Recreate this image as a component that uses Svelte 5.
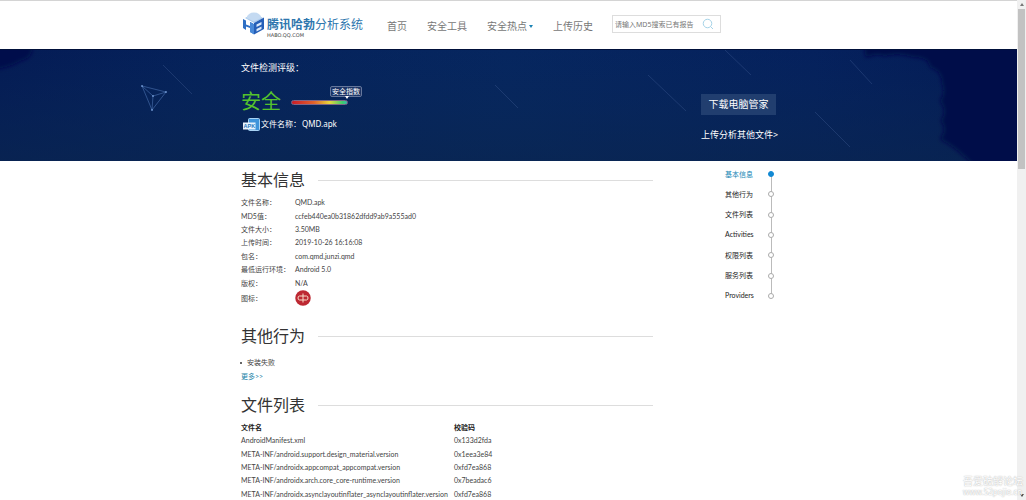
<script>
  const info = [
    ['文件名称：', 'QMD.apk'],
    ['MD5值：', 'ccfeb440ea0b31862dfdd9ab9a555ad0'],
    ['文件大小：', '3.50MB'],
    ['上传时间：', '2019-10-26 16:16:08'],
    ['包名：', 'com.qmd.junzi.qmd'],
    ['最低运行环境：', 'Android 5.0'],
    ['版权：', 'N/A']
  ];
  const files = [
    ['AndroidManifest.xml', '0x133d2fda'],
    ['META-INF/android.support.design_material.version', '0x1eea3e84'],
    ['META-INF/androidx.appcompat_appcompat.version', '0xfd7ea868'],
    ['META-INF/androidx.arch.core_core-runtime.version', '0x7beadac6'],
    ['META-INF/androidx.asynclayoutinflater_asynclayoutinflater.version', '0xfd7ea868']
  ];
  const anchors = ['基本信息', '其他行为', '文件列表', 'Activities', '权限列表', '服务列表', 'Providers'];
  let active = $state(0);
</script>

<div class="shell">
  <div class="page">
    <header>
      <div class="wrap top">
        <a class="logo" href="#home">
          <svg viewBox="0 0 44 46" aria-hidden="true">
            <path d="M4 12 22 2l18 10-18 10z" fill="#a9caec" />
            <path d="M7 12Q10 1 22 1t15 11L22 19z" fill="#c4daf2" />
            <path d="M0 14l6 3v8l8 3v-8l6 3v20l-6-3v-8l-8-3v7l-6-4z" fill="#2f6fc4" />
            <path d="M14 20l8 4v21l-8-5z" fill="#4889d8" />
            <path d="M22 22 42 11v23L22 45z" fill="#255fb8" />
            <path d="M27 25l10-5v5l-10 5zM27 34l10-5v5l-10 5z" fill="#dceafa" />
          </svg>
          <span class="brand">
            <span class="name"><b>腾讯哈勃</b>分析系统</span>
            <span class="domain">HABO.QQ.COM</span>
          </span>
        </a>
        <nav class="menu">
          <a href="#home">首页</a>
          <a href="#tools">安全工具</a>
          <a href="#hot">安全热点<i class="caret"></i></a>
          <a href="#history">上传历史</a>
        </nav>
        <form class="search">
          <input type="text" aria-label="搜索" placeholder="请输入MD5搜索已有报告" />
          <button type="button" aria-label="提交搜索">
            <svg viewBox="0 0 24 24" fill="none" stroke="#a5d3e8" stroke-width="2"><circle cx="11" cy="11" r="8.5" /><path d="M17 17l5 5" /></svg>
          </button>
        </form>
      </div>
    </header>

    <section class="banner">
      <svg class="sky" viewBox="0 0 1017 112" preserveAspectRatio="xMidYMid slice" aria-hidden="true">
        <defs>
          <linearGradient id="night" x1="0" y1="0" x2="1" y2="0">
            <stop offset="0" stop-color="#041b55" />
            <stop offset=".2" stop-color="#05225b" />
            <stop offset=".5" stop-color="#06265f" />
            <stop offset=".8" stop-color="#05215d" />
            <stop offset="1" stop-color="#031a55" />
          </linearGradient>
          <linearGradient id="low" x1="0" y1="0" x2="0" y2="1">
            <stop offset="0" stop-color="#0a2a58" stop-opacity="0" />
            <stop offset="1" stop-color="#0a2650" stop-opacity=".7" />
          </linearGradient>
          <filter id="soft" x="-10%" y="-10%" width="120%" height="120%"><feGaussianBlur stdDeviation="2" /></filter>
        </defs>
        <rect width="1017" height="112" fill="url(#night)" />
        <rect width="1017" height="112" fill="url(#low)" />
        <path d="M-9-9h41v11q-2 8-12 10-8 6-29 9z" fill="#00094c" filter="url(#soft)" />
        <path d="M1030-9H863l3 18q10-6 19-2 14-4 28 1 16 0 17 10 12 4 12 16 4 10-2 18 8 10 1 20 7 8-1 18 20 10 40 34h50z" fill="#000d49" filter="url(#soft)" />
        <path d="M0 0h1017v1H0z" fill="#00103a" />
        <g stroke="#4a68a0" stroke-opacity=".32">
          <path d="M163 16l29 29M495 36l23 23M648 26l38 36M725 1l26 25M850 11l22 24M815 63l35 35" />
        </g>
        <g fill="none" stroke="#5d87c9" stroke-opacity=".6" stroke-width=".8">
          <path d="M142 37l24 6-14 18zM142 37l11 10 13-4M153 47l-1 14" />
        </g>
        <g fill="#7ba3de" fill-opacity=".8"><circle cx="142" cy="37" r="1" /><circle cx="166" cy="43" r="1" /><circle cx="152" cy="61" r="1" /><circle cx="153" cy="47" r="1" /></g>
      </svg>
      <div class="wrap hero">
        <div class="verdict">
          <div class="caption">文件检测评级：</div>
          <div class="score">
            <strong>安全</strong>
            <span class="meter"><span class="tip">安全指数</span></span>
          </div>
          <div class="file">
            <svg viewBox="0 0 34 26" aria-hidden="true">
              <rect x="11" y="1" width="22" height="24" rx="2" fill="#3f94da" stroke="#a8d3f4" stroke-width="2" />
              <rect x="0" y="9" width="25" height="14" fill="#e9f4fd" />
              <text x="1" y="20" font-size="11" font-weight="700" font-family="Liberation Sans, sans-serif" fill="#2877bd">APK</text>
            </svg>
            <span>文件名称：</span><span>QMD.apk</span>
          </div>
        </div>
        <div class="actions">
          <button type="button">下载电脑管家</button>
          <a href="#upload">上传分析其他文件&gt;</a>
        </div>
      </div>
    </section>

    <div class="wrap body">
      <main>
        <section>
          <h2>基本信息</h2>
          <dl>
            {#each info as [label, value]}
              <div><dt>{label}</dt><dd>{value}</dd></div>
            {/each}
          </dl>
          <div class="iconrow">
            <span>图标：</span>
            <svg viewBox="0 0 32 32" role="img" aria-label="QMD">
              <circle cx="16" cy="16" r="15.5" fill="#bd2832" />
              <path d="M9 12h14q3 0 3 4t-3 4H9q-3 0-3-4t3-4zM16 7v18" fill="none" stroke="#f8dcc8" stroke-width="2" />
            </svg>
          </div>
        </section>
        <section class="others">
          <h2>其他行为</h2>
          <ul><li>安装失败</li></ul>
          <a class="more" href="#more">更多&gt;&gt;</a>
        </section>
        <section class="files">
          <h2>文件列表</h2>
          <table>
            <thead><tr><th>文件名</th><th>校验码</th></tr></thead>
            <tbody>
              {#each files as [name, sum]}
                <tr><td>{name}</td><td>{sum}</td></tr>
              {/each}
            </tbody>
          </table>
        </section>
      </main>
      <nav class="anchors">
        {#each anchors as name, i}
          <a href="#section" class:on={active === i} onclick={() => (active = i)}>{name}</a>
        {/each}
      </nav>
    </div>
  </div>
  <div class="scrollbar" aria-hidden="true"><i class="up"></i><div class="thumb"></div><i class="down"></i></div>
  <div class="mark"><span>吾爱破解论坛</span><span class="url">www.52pojie.cn</span></div>
</div>

<style>
  .shell {
    position: relative;
    display: flex;
    height: 100vh;
    overflow: hidden;
    background: #fff;
    color: #444;
    font: 7px/13px "Noto Sans", "Noto Sans CJK SC", sans-serif;
  }
  .page { flex: 1; min-width: 0; }
  a { color: inherit; text-decoration: none; }
  button, input { font: inherit; border: 0; padding: 0; margin: 0; background: none; }
  .wrap { box-sizing: border-box; width: 100%; max-width: 535px; margin: 0 auto; }

  header { border-top: 1px solid #d4d4d4; height: 48px; }
  .top { display: flex; align-items: flex-start; }
  .logo { display: flex; padding: 11px 0 0 2px; gap: 2px; width: 146px; box-sizing: border-box; }
  .logo svg { width: 22px; height: 23px; }
  .brand { display: flex; flex-direction: column; padding-top: 5px; color: #2e76ae; white-space: nowrap; }
  .name { font-size: 12px; line-height: 16px; }
  .domain { font: 5px/5px "DejaVu Sans", sans-serif; color: #444; }
  .menu { display: flex; gap: 20px; padding-top: 18px; font-size: 10px; line-height: 14px; color: #777; white-space: nowrap; }
  .menu a { display: flex; align-items: center; }
  .caret { border: 2px solid transparent; border-top: 3px solid #1b83b5; border-bottom: 0; margin-left: 2px; }
  .search {
    display: flex;
    align-items: center;
    box-sizing: border-box;
    width: 109px;
    height: 18px;
    margin: 14px 0 0 19px;
    border: 1px solid #ddd;
    flex-shrink: 0;
  }
  .search input { flex: 1; min-width: 0; padding-left: 2px; outline: 0; color: #555; }
  .search input::placeholder { color: #777; opacity: 1; }
  .search button { display: flex; margin-right: 6px; }
  .search svg { width: 12px; height: 12px; }

  .banner { position: relative; height: 112px; background: #05215c; color: #fff; }
  .sky { position: absolute; inset: 0; width: 100%; height: 100%; }
  .hero { position: relative; display: flex; justify-content: space-between; }
  .caption { font-size: 9px; line-height: 14px; padding-top: 12px; }
  .score { display: flex; align-items: center; gap: 11px; height: 28px; margin-top: 13px; }
  .score strong { font-size: 20px; line-height: 28px; font-weight: 400; color: #55c22d; width: 39px; white-space: nowrap; }
  .meter {
    position: relative;
    box-sizing: border-box;
    width: 57px;
    height: 5px;
    border: 1px solid #7f6688;
    border-radius: 3px;
    background: linear-gradient(90deg, #c91c28, #e2622b 40%, #e8d53a 68%, #3ccb6d 92%, #35b8b0);
  }
  .tip {
    position: absolute;
    right: -15px;
    bottom: 7px;
    box-sizing: border-box;
    width: 32px;
    border: 1px solid #65779c;
    border-radius: 2px;
    background: #1c3466;
    font-size: 7px;
    line-height: 9px;
    text-align: center;
    white-space: nowrap;
  }
  .tip::after {
    content: "";
    position: absolute;
    left: 14px;
    top: 9px;
    border: 2px solid transparent;
    border-top: 3px solid #fff;
    border-bottom: 0;
  }
  .file { display: flex; align-items: center; gap: 1px; font-size: 8px; line-height: 14px; padding-left: 2px; margin-top: 1px; }
  .file svg { width: 17px; height: 13px; }
  .actions { display: flex; flex-direction: column; width: 75px; padding-top: 45px; }
  .actions button { height: 21px; background: #213e6f; color: #fff; font-size: 10px; cursor: pointer; white-space: nowrap; }
  .actions a { margin-top: 13px; font-size: 9px; line-height: 14px; white-space: nowrap; }

  .body { display: flex; justify-content: space-between; font-family: Lato, "Noto Sans CJK SC", sans-serif; }
  main { width: 412px; }
  h2 {
    display: flex;
    align-items: center;
    gap: 13px;
    margin: 0;
    font-size: 16px;
    line-height: 20px;
    font-weight: 400;
    color: #333;
  }
  h2::after { content: ""; flex: 1; height: 1px; background: #ddd; }
  main section { padding-top: 9px; }
  dl { display: grid; grid-template-rows: repeat(7, 1fr); height: 94px; margin: 6px 0 0; }
  dl div, .iconrow { display: grid; grid-template-columns: 54px 1fr; align-items: center; white-space: nowrap; }
  dd { margin: 0; }
  .iconrow svg { width: 16px; height: 16px; }
  main .others { padding-top: 20px; }
  ul { list-style: none; margin: 10px 0 0; padding: 0; }
  li { display: flex; align-items: center; gap: 5px; }
  li::before { content: ""; width: 2px; height: 2px; margin-left: -1px; border-radius: 1px; background: #333; }
  .more { display: block; color: #1b83a8; margin-top: 1px; }
  main .files { padding-top: 12px; }
  table { width: 100%; height: 80px; margin-top: 6px; border-collapse: collapse; table-layout: fixed; }
  th, td { padding: 0; text-align: left; white-space: nowrap; }
  th { width: 213px; color: #222; }

  .anchors { display: grid; grid-template-rows: repeat(7, 1fr); height: 142px; width: 51px; padding-top: 3px; color: #222; }
  .anchors a { position: relative; display: flex; align-items: center; justify-content: space-between; padding-right: 2px; }
  .anchors a::after {
    content: "";
    box-sizing: border-box;
    width: 6px;
    height: 6px;
    border: 1px solid #aaa;
    border-radius: 50%;
    background: #fff;
    z-index: 1;
  }
  .anchors a:not(:last-child)::before {
    content: "";
    position: absolute;
    right: 4px;
    top: 50%;
    width: 1px;
    height: 100%;
    background: #bbb;
  }
  .anchors .on { color: #1385b4; }
  .anchors .on::after { background: #1289d3; border-color: #1289d3; }

  .scrollbar { display: flex; flex-direction: column; align-items: center; width: 9px; background: #f0f0f0; }
  .thumb { width: 7px; height: 160px; margin-top: 3px; background: #c2c2c2; }
  .up, .down { border: 2px solid transparent; }
  .up { border-bottom: 3px solid #777; border-top: 0; margin-top: 3px; }
  .down { border-top: 3px solid #444; border-bottom: 0; margin: auto 0 3px; }
  .mark {
    position: absolute;
    right: 3px;
    bottom: 3px;
    display: flex;
    flex-direction: column;
    font-size: 10px;
    line-height: 12px;
    color: #fff;
    text-shadow: 0 0 1px #aaa, 0 0 2px #ddd;
  }
  .url { font-size: 8px; line-height: 10px; }
</style>
